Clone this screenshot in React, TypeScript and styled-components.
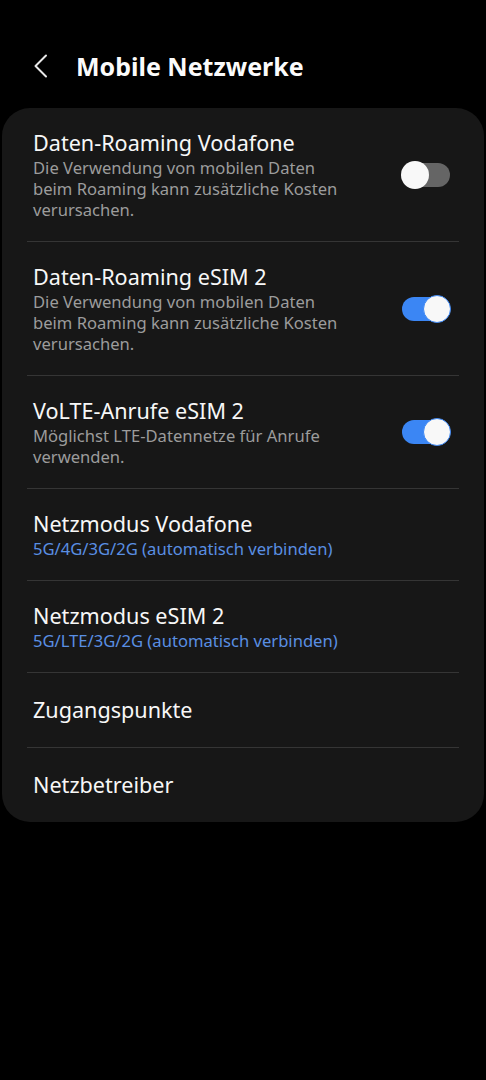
import React from 'react';
import { styled, createGlobalStyle } from 'styled-components';

const GlobalStyle = createGlobalStyle`
    html, body {
        margin: 0;
        padding: 0;
        background: #000;
    }
    body {
        font-family: "Noto Sans", Roboto, "Liberation Sans", sans-serif;
        color: #f7f7f7;
    }
`

type SettingItem = {
    title: string
    sub?: string
    blue?: boolean
    toggle?: 'on' | 'off'
}

const items: SettingItem[] = [
    { title: 'Daten-Roaming Vodafone', sub: 'Die Verwendung von mobilen Daten beim Roaming kann zusätzliche Kosten verursachen.', toggle: 'off' },
    { title: 'Daten-Roaming eSIM 2', sub: 'Die Verwendung von mobilen Daten beim Roaming kann zusätzliche Kosten verursachen.', toggle: 'on' },
    { title: 'VoLTE-Anrufe eSIM 2', sub: 'Möglichst LTE-Datennetze für Anrufe verwenden.', toggle: 'on' },
    { title: 'Netzmodus Vodafone', sub: '5G/4G/3G/2G (automatisch verbinden)', blue: true },
    { title: 'Netzmodus eSIM 2', sub: '5G/LTE/3G/2G (automatisch verbinden)', blue: true },
    { title: 'Zugangspunkte' },
    { title: 'Netzbetreiber' },
]

export default function App() {
    return (
        <Screen>
            <GlobalStyle />
            <Header>
                <BackButton>
                    <svg width="16" height="24" viewBox="0 0 16 24" fill="none">
                        <path d="M13 1.5 L2.5 12 L13 22.5" stroke="#e8e8e8" strokeWidth="2" strokeLinecap="round" strokeLinejoin="round" />
                    </svg>
                </BackButton>
                <Title>Mobile Netzwerke</Title>
            </Header>
            <Card>
                {items.map(item => (
                    <Row key={item.title} $plain={!item.sub}>
                        <TextCol>
                            <ItemTitle>{item.title}</ItemTitle>
                            {item.sub && <ItemSub $blue={item.blue}>{item.sub}</ItemSub>}
                        </TextCol>
                        {item.toggle && (
                            <Switch $on={item.toggle === 'on'}>
                                <Knob $on={item.toggle === 'on'} />
                            </Switch>
                        )}
                    </Row>
                ))}
            </Card>
        </Screen>
    )
}

const Screen = styled.div`
    width: 486px;
    height: 1080px;
    background: #000;
    overflow: hidden;
`

const Header = styled.div`
    height: 108px;
    display: flex;
    align-items: center;
    padding: 24px 0 0 33px;
    box-sizing: border-box;
`

const BackButton = styled.div`
    width: 16px;
    height: 24px;
    display: flex;
    margin-right: 27px;
`

const Title = styled.h1`
    margin: 0;
    font-size: 25px;
    line-height: 32px;
    font-weight: 700;
    color: #fbfbfb;
`

const Card = styled.div`
    margin: 0 2px;
    background: #171717;
    border-radius: 28px;
    padding: 0 25px;
`

const Row = styled.div<{ $plain?: boolean }>`
    display: flex;
    align-items: center;
    justify-content: space-between;
    padding: ${p => (p.$plain ? '23px' : '21px')} 9px ${p => (p.$plain ? '23px' : '21px')} 6px;
    border-bottom: 1px solid #353535;
    &:last-child {
        border-bottom: none;
    }
`

const TextCol = styled.div`
    max-width: 314px;
    display: flex;
    flex-direction: column;
`

const ItemTitle = styled.div`
    font-size: 21.6px;
    line-height: 28px;
    color: #f7f7f7;
`

const ItemSub = styled.div<{ $blue?: boolean }>`
    font-size: 16.6px;
    line-height: 21px;
    color: ${p => (p.$blue ? '#5a8fe3' : '#9c9c9c')};
`

const Switch = styled.div<{ $on: boolean }>`
    position: relative;
    width: 48px;
    height: 24px;
    border-radius: 12px;
    background: ${p => (p.$on ? '#3b86f4' : '#656565')};
    flex-shrink: 0;
`

const Knob = styled.div<{ $on: boolean }>`
    position: absolute;
    top: -2px;
    ${p => (p.$on ? 'right: -1px;' : 'left: -1px;')}
    width: 28px;
    height: 28px;
    border-radius: 50%;
    background: #f8f8f8;
    box-sizing: border-box;
    border: ${p => (p.$on ? '1.5px solid #3b86f4' : 'none')};
`
